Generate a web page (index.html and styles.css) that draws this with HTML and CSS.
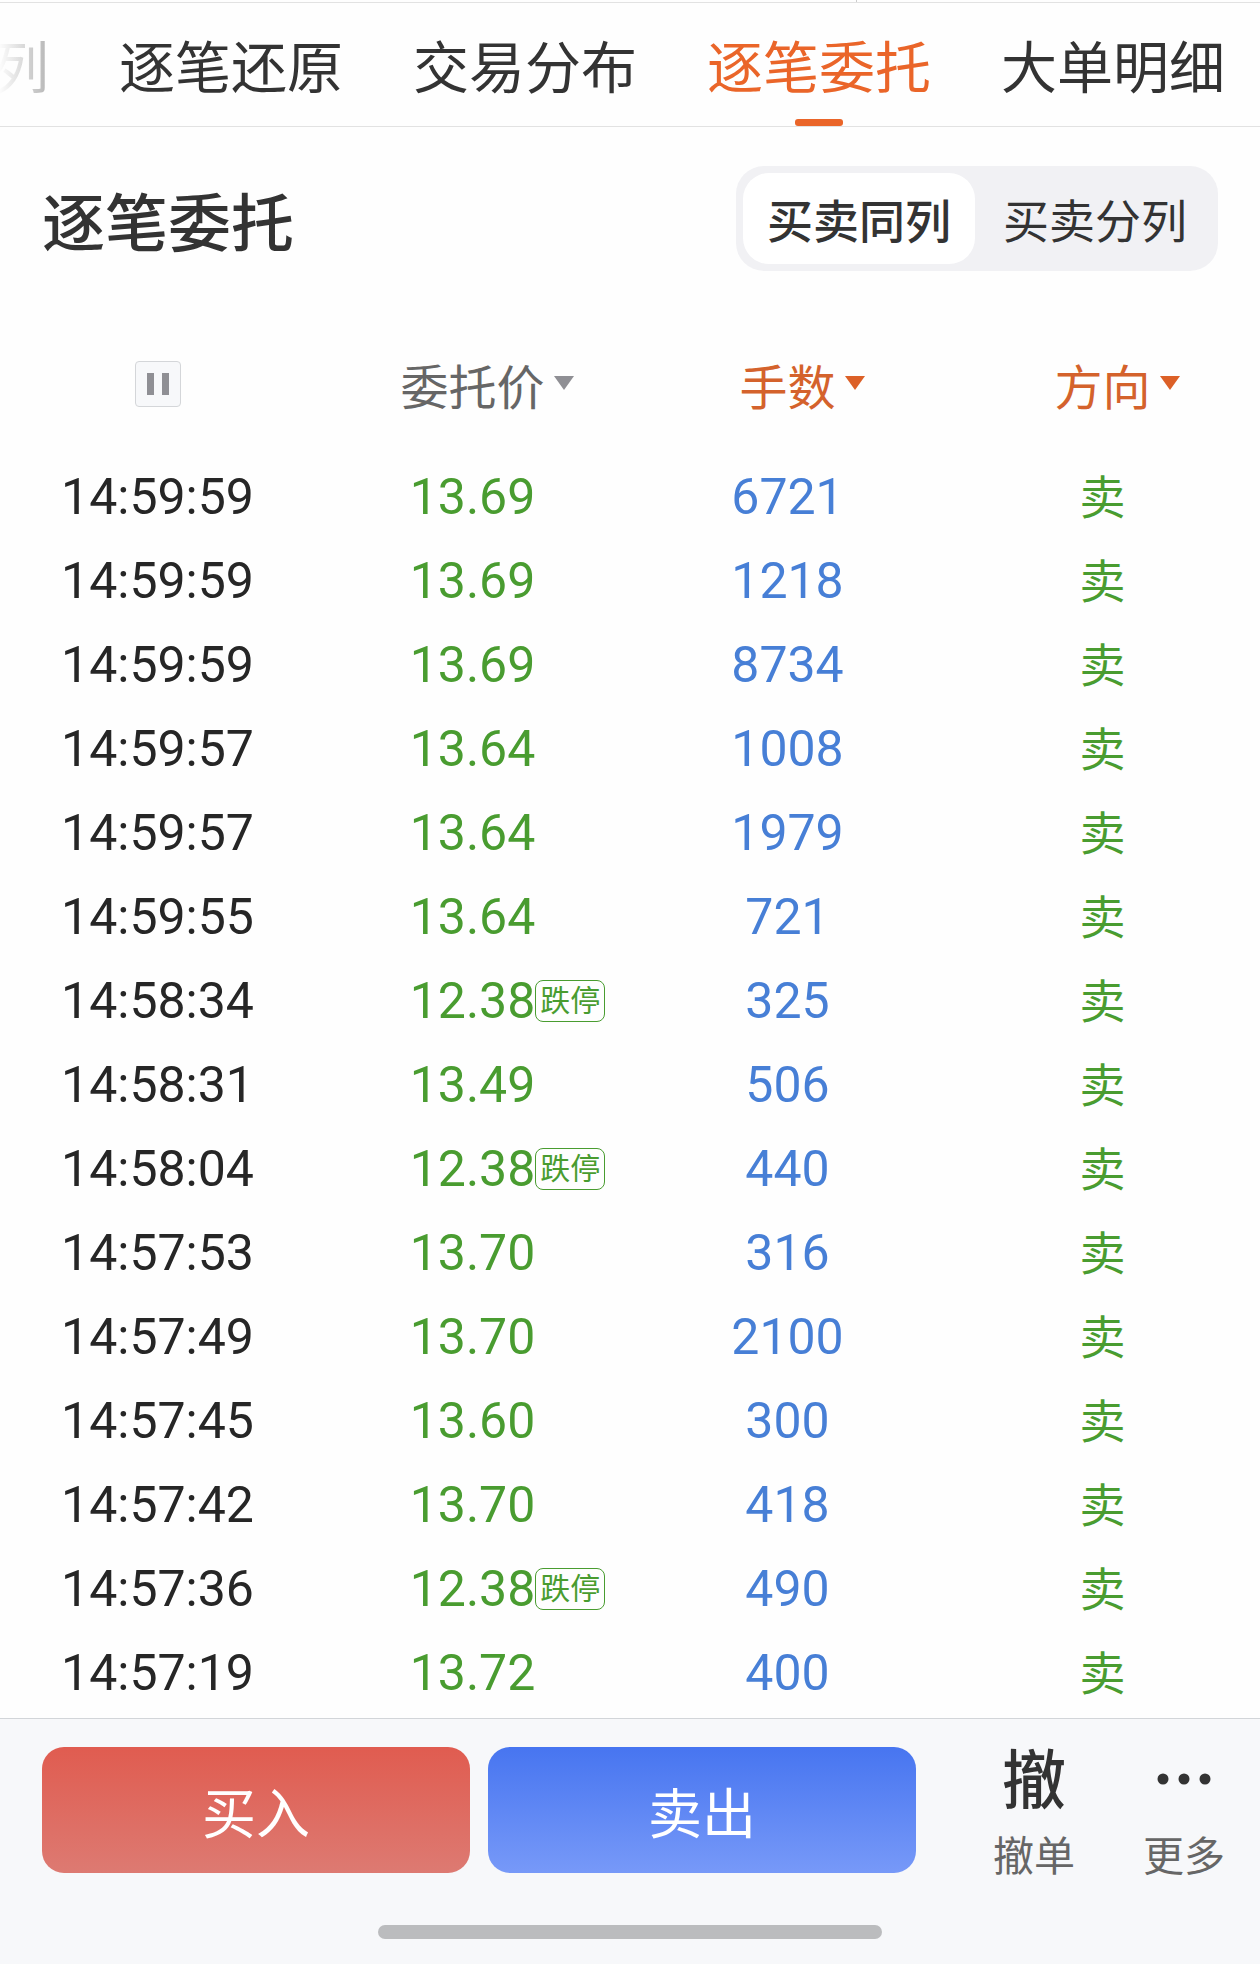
FILE: index.html
```
<!DOCTYPE html>
<html lang="zh-CN">
<head>
  <meta charset="UTF-8">
  <meta name="viewport" content="width=device-width, initial-scale=1.0">
  <title>逐笔委托</title>
  <link rel="stylesheet" href="styles.css">
</head>
<body>
  <div class="top-edge"></div>

  <!-- Tabs -->
  <nav class="tabs">
    <a class="tab tab-faded" href="#">列</a>
    <a class="tab" href="#">逐笔还原</a>
    <a class="tab" href="#">交易分布</a>
    <a class="tab active" href="#" aria-current="page">逐笔委托</a>
    <a class="tab" href="#">大单明细</a>
  </nav>

  <main>
    <div class="title-bar">
      <h1>逐笔委托</h1>
      <div class="segment">
        <button class="active" type="button">买卖同列</button>
        <button type="button">买卖分列</button>
      </div>
    </div>

    <!-- Order list -->
    <table class="orders">
      <thead>
        <tr>
          <th>
            <button class="pause" type="button" aria-label="暂停">
              <svg viewBox="0 0 24 22" width="24" height="22" fill="#8f8f94"><path d="M1 0h7v22H1zM16 0h7v22h-7z"/></svg>
            </button>
          </th>
          <th><button class="filter" type="button">委托价</button></th>
          <th><button class="filter on" type="button">手数</button></th>
          <th><button class="filter on" type="button">方向</button></th>
        </tr>
      </thead>
      <tbody>
        <tr><td>14:59:59</td><td class="price">13.69</td><td class="lots">6721</td><td class="side">卖</td></tr>
        <tr><td>14:59:59</td><td class="price">13.69</td><td class="lots">1218</td><td class="side">卖</td></tr>
        <tr><td>14:59:59</td><td class="price">13.69</td><td class="lots">8734</td><td class="side">卖</td></tr>
        <tr><td>14:59:57</td><td class="price">13.64</td><td class="lots">1008</td><td class="side">卖</td></tr>
        <tr><td>14:59:57</td><td class="price">13.64</td><td class="lots">1979</td><td class="side">卖</td></tr>
        <tr><td>14:59:55</td><td class="price">13.64</td><td class="lots">721</td><td class="side">卖</td></tr>
        <tr><td>14:58:34</td><td class="price"><span class="limit">12.38<span class="badge">跌停</span></span></td><td class="lots">325</td><td class="side">卖</td></tr>
        <tr><td>14:58:31</td><td class="price">13.49</td><td class="lots">506</td><td class="side">卖</td></tr>
        <tr><td>14:58:04</td><td class="price"><span class="limit">12.38<span class="badge">跌停</span></span></td><td class="lots">440</td><td class="side">卖</td></tr>
        <tr><td>14:57:53</td><td class="price">13.70</td><td class="lots">316</td><td class="side">卖</td></tr>
        <tr><td>14:57:49</td><td class="price">13.70</td><td class="lots">2100</td><td class="side">卖</td></tr>
        <tr><td>14:57:45</td><td class="price">13.60</td><td class="lots">300</td><td class="side">卖</td></tr>
        <tr><td>14:57:42</td><td class="price">13.70</td><td class="lots">418</td><td class="side">卖</td></tr>
        <tr><td>14:57:36</td><td class="price"><span class="limit">12.38<span class="badge">跌停</span></span></td><td class="lots">490</td><td class="side">卖</td></tr>
        <tr><td>14:57:19</td><td class="price">13.72</td><td class="lots">400</td><td class="side">卖</td></tr>
      </tbody>
    </table>
  </main>

  <!-- Trade bar -->
  <footer>
    <div class="actions">
      <button class="trade buy" type="button">买入</button>
      <button class="trade sell" type="button">卖出</button>
      <div class="tools">
        <button class="tool" type="button">
          <span class="tool-icon tool-char">撤</span>
          <span>撤单</span>
        </button>
        <button class="tool" type="button">
          <span class="tool-icon">
            <svg viewBox="0 0 54 12" width="54" height="12" fill="#333"><circle cx="6" cy="6" r="5.5"/><circle cx="27" cy="6" r="5.5"/><circle cx="48" cy="6" r="5.5"/></svg>
          </span>
          <span>更多</span>
        </button>
      </div>
    </div>
    <div class="home-bar"></div>
  </footer>
</body>
</html>
```

FILE: styles.css
```
/* RESET & BASE STYLES */
* {
  margin: 0;
  padding: 0;
  box-sizing: border-box;
}
body {
  display: flex;
  flex-direction: column;
  min-height: 100vh;
  font-family: "Noto Sans CJK SC", sans-serif;
  background: #fefefe;
  color: #333;
}
button {
  font: inherit;
  color: inherit;
  background: none;
  border: none;
  cursor: pointer;
}
main {
  flex: 1;
}
.top-edge {
  height: 3px;
  border-bottom: 1px solid #e2e2e2;
  background: linear-gradient(#ccc, #ccc) 68% 0 / 1px 100% no-repeat;
}
/* TABS */
.tabs {
  display: flex;
  justify-content: flex-end;
  gap: 70px;
  height: 124px;
  padding-right: 35px;
  border-bottom: 1px solid #e2e2e2;
  overflow: hidden;
}
.tab {
  position: relative;
  flex: none;
  font-size: 56px;
  line-height: 122px;
  color: #333;
  text-decoration: none;
}
.tab.active {
  color: #ea6529;
}
.tab.active::after {
  content: "";
  position: absolute;
  left: 50%;
  bottom: 0;
  width: 48px;
  height: 7px;
  margin-left: -24px;
  border-radius: 3px;
  background: #ea6529;
}
.tab-faded {
  background: linear-gradient(to right, #fefefe 10%, #b4b4b4);
  -webkit-background-clip: text;
  background-clip: text;
  color: transparent;
}
/* TITLE */
.title-bar {
  display: flex;
  align-items: center;
  justify-content: space-between;
  padding: 39px 42px 0;
}
h1 {
  font-size: 63px;
  font-weight: 500;
  line-height: 105px;
}
.segment {
  display: flex;
  padding: 7px;
  border-radius: 28px;
  background: #f1f1f4;
}
.segment button {
  padding: 0 24px;
  border-radius: 26px;
  font-size: 46px;
  line-height: 91px;
}
.segment button + button {
  padding-left: 28px;
}
.segment .active {
  background: #fff;
  font-weight: 500;
}
/* ORDERS */
.orders {
  width: 100%;
  table-layout: fixed;
  border-collapse: collapse;
  text-align: center;
}
.orders th {
  height: 184px;
  padding-top: 42px;
  font-weight: 400;
  vertical-align: middle;
}
.orders td {
  height: 84px;
  font-family: Roboto, "Noto Sans CJK SC", sans-serif;
  font-size: 50px;
  line-height: 84px;
  color: #262626;
}
.pause {
  display: inline-flex;
  align-items: center;
  justify-content: center;
  width: 46px;
  height: 46px;
  border: 1px solid #d4d6d9;
  border-radius: 4px;
  background: #f7f8fa;
  vertical-align: middle;
}
.filter {
  position: relative;
  font-size: 48px;
  color: #666;
}
.filter::after {
  content: "";
  position: absolute;
  left: 100%;
  top: 50%;
  margin: -8px 0 0 9px;
  border: 10px solid transparent;
  border-top: 14px solid #8f8f94;
  border-bottom: 0;
}
.filter.on {
  color: #d4622c;
}
.filter.on::after {
  border-top-color: #dc6027;
}
.orders .price,
.orders .side {
  color: #499c30;
}
.orders .lots {
  color: #477fd6;
}
.orders .side {
  padding-bottom: 6px;
  font-family: "Noto Sans CJK SC", sans-serif;
  font-size: 46px;
  line-height: 78px;
}
.limit {
  position: relative;
}
.badge {
  position: absolute;
  left: 100%;
  top: 50%;
  width: 70px;
  height: 42px;
  margin-top: -21px;
  border: 1px solid #499c30;
  border-radius: 8px;
  font-size: 30px;
  line-height: 40px;
}
/* TRADE BAR */
footer {
  padding: 28px 0 25px;
  border-top: 1px solid #d2d5d9;
  background: #f7f8fa;
}
.actions {
  display: flex;
  gap: 18px;
  padding: 0 35px 0 42px;
}
.trade {
  flex: 1;
  height: 126px;
  border-radius: 22px;
  font-size: 54px;
  color: #fff;
}
.buy {
  background: linear-gradient(#e05c50, #dd7a72);
}
.sell {
  background: linear-gradient(#4775f0, #7799f8);
}
.tools {
  display: flex;
  gap: 68px;
  margin-left: 59px;
}
.tool {
  font-size: 41px;
  line-height: 52px;
  color: #666;
}
.tool span {
  display: block;
}
.tool .tool-icon {
  display: flex;
  align-items: center;
  justify-content: center;
  height: 64px;
  margin-bottom: 16px;
  font-size: 64px;
  font-weight: 500;
  color: #333;
}
.tool .tool-char {
  padding-bottom: 8px;
}
.home-bar {
  width: 40%;
  height: 14px;
  margin: 46px auto 0;
  border-radius: 7px;
  background: #bbbcbe;
}
```
